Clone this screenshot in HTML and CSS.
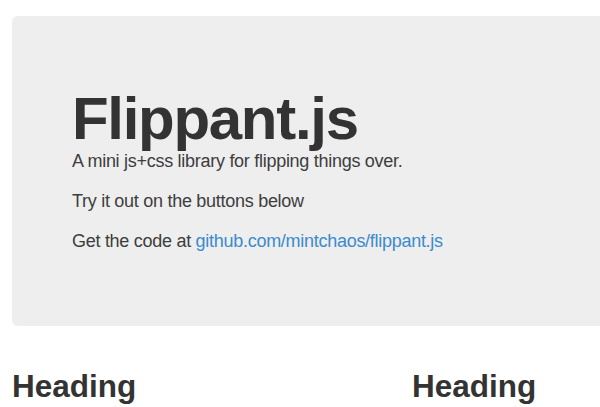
FILE: index.html
```html
<!DOCTYPE html>
<html>
<head>
<meta charset="utf-8">
<title>Flippant.js</title>
<link rel="stylesheet" href="styles.css">
</head>
<body>
<div class="container">
  <div class="hero-unit">
    <h1>Flippant.js</h1>
    <p>A mini js+css library for flipping things over.</p>
    <p>Try it out on the buttons below</p>
    <p>Get the code at <a href="#">github.com/mintchaos/flippant.js</a></p>
  </div>
  <div class="row">
    <div class="span"><h2>Heading</h2></div>
    <div class="span"><h2>Heading</h2></div>
  </div>
</div>
</body>
</html>
```
FILE: styles.css
```css
html, body {
  overflow: hidden;
}
body {
  margin: 0;
  padding-top: 16px;
  font-family: "Liberation Sans", Arial, sans-serif;
  font-size: 14px;
  line-height: 20px;
  color: #333333;
  background: #ffffff;
}
.container {
  width: 940px;
  margin-left: 12px;
}
.hero-unit {
  padding: 60px;
  margin-bottom: 30px;
  background: #eeeeee;
  border-radius: 6px;
}
.hero-unit h1 {
  margin: 13px 0 -3px;
  font-size: 60px;
  line-height: 1;
  letter-spacing: -1.3px;
  font-weight: bold;
  color: #333333;
}
.hero-unit p {
  margin: 0 0 10px;
  font-size: 18px;
  line-height: 30px;
  font-weight: 200;
  letter-spacing: -0.28px;
  color: #3d3d3d;
}
.hero-unit a {
  color: #3a8bcd;
  text-decoration: none;
}
.row {
  display: grid;
  grid-template-columns: repeat(2, 380px);
  column-gap: 20px;
}
.row h2 {
  margin: 10px 0;
  font-size: 31.5px;
  line-height: 40px;
  font-weight: bold;
  color: #333333;
}
```
